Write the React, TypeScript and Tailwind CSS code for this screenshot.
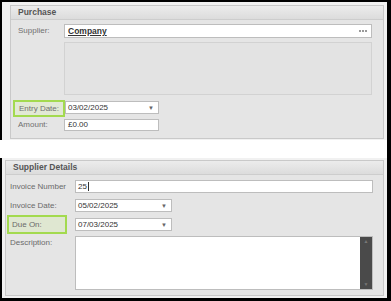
import React from "react";

const font = { fontFamily: '"Liberation Sans", Arial, sans-serif' };

function Arrow() {
  return <span className="absolute right-[4px] top-[1px] text-[6px] leading-[11px] text-[#666]">▼</span>;
}

export default function App() {
  return (
    <div style={font} className="w-[391px] h-[301px] bg-white border-r-[4px] border-black flex flex-col text-[8px]">
      {/* Top section */}
      <div className="h-[140px] border-l-[2px] border-t-[2px] border-black bg-[#f1f1f1] pl-[8px] pt-[3px] pr-[3px]">
        <div className="h-[134px] border border-[#c9c9c9] bg-[#e5e5e5] flex flex-col">
          <div className="h-[14px] bg-gradient-to-b from-[#ececec] to-[#dcdcdc] border-b border-[#cdcdcd] pl-[7px] flex items-center font-bold text-[8.5px] text-[#555]">
            Purchase
          </div>
          <div className="pl-[2px] pt-[4px] flex flex-col">
            <div className="flex items-center h-[14px]">
              <div className="w-[51px] pl-[5px] text-[#707070]">Supplier:</div>
              <div className="relative w-[308px] h-[14px] bg-white border border-[#bdbdbd] pl-[3px] flex items-center">
                <span className="font-bold underline text-[#333] text-[8.5px]">Company</span>
                <div className="absolute right-[4px] top-[5px] flex gap-[1px]">
                  <span className="w-[2px] h-[2px] bg-[#9a9a9a]" />
                  <span className="w-[2px] h-[2px] bg-[#9a9a9a]" />
                  <span className="w-[2px] h-[2px] bg-[#9a9a9a]" />
                </div>
              </div>
            </div>
            <div className="ml-[51px] mt-[4px] w-[308px] h-[53px] border border-[#d2d2d2] bg-[#e3e3e3]" />
            <div className="flex items-start mt-[5px]">
              <div className="w-[52px] h-[17px] border-[2px] border-[#a3da4f] bg-[#e2e9d5] pl-[4px] flex items-center text-[#707070]">Entry Date:</div>
              <div className="relative mt-[1px] w-[94px] h-[13px] bg-white border border-[#bdbdbd] pl-[2px] flex items-center text-[#333]">
                03/02/2025
                <Arrow />
              </div>
            </div>
            <div className="flex items-center mt-[2px]">
              <div className="w-[51px] pl-[5px] text-[#707070]">Amount:</div>
              <div className="w-[95px] h-[12px] bg-white border border-[#bdbdbd] pl-[3px] flex items-center text-[#333]">£0.00</div>
            </div>
          </div>
        </div>
      </div>
      <div className="h-[18px] bg-white" />
      {/* Bottom section */}
      <div className="h-[143px] border-l-[2px] border-b-[3px] border-black bg-[#f1f1f1] pl-[3px] pt-[2px] pr-[3px]">
        <div className="h-[136px] border border-[#c9c9c9] bg-[#e5e5e5] flex flex-col">
          <div className="h-[14px] bg-gradient-to-b from-[#ececec] to-[#dcdcdc] border-b border-[#cdcdcd] pl-[7px] flex items-center font-bold text-[8.5px] text-[#555]">
            Supplier Details
          </div>
          <div className="pt-[5px] flex flex-col">
            <div className="flex items-center">
              <div className="w-[69px] pl-[4px] text-[#6a6a6a]">Invoice Number</div>
              <div className="w-[298px] h-[13px] bg-white border border-[#bdbdbd] pl-[2px] flex items-center text-[#333]">
                25<span className="inline-block w-[1px] h-[9px] bg-[#333] ml-[1px]" />
              </div>
            </div>
            <div className="flex items-center mt-[6px]">
              <div className="w-[69px] pl-[4px] text-[#6a6a6a]">Invoice Date:</div>
              <div className="relative w-[97px] h-[13px] bg-white border border-[#bdbdbd] pl-[2px] flex items-center text-[#333]">
                05/02/2025
                <Arrow />
              </div>
            </div>
            <div className="flex items-center mt-[3px]">
              <div className="ml-[1px] w-[60px] h-[19px] border-[2px] border-[#a3da4f] bg-[#dfe7d1] pl-[3px] flex items-center text-[#6a6a6a]">Due On:</div>
              <div className="ml-[8px] relative w-[97px] h-[13px] bg-white border border-[#bdbdbd] pl-[2px] flex items-center text-[#333]">
                07/03/2025
                <Arrow />
              </div>
            </div>
            <div className="flex items-start mt-[2px]">
              <div className="w-[69px] pl-[4px] pt-[1px] text-[#6a6a6a]">Description:</div>
              <div className="w-[298px] h-[54px] bg-white border border-[#bdbdbd] flex justify-end">
                <div className="w-[12px] h-full bg-[#4a4a4a] flex flex-col items-center justify-between py-[2px]">
                  <span className="text-[5px] leading-[5px] text-[#777]">▲</span>
                  <span className="text-[5px] leading-[5px] text-[#777]">▼</span>
                </div>
              </div>
            </div>
          </div>
        </div>
      </div>
    </div>
  );
}
